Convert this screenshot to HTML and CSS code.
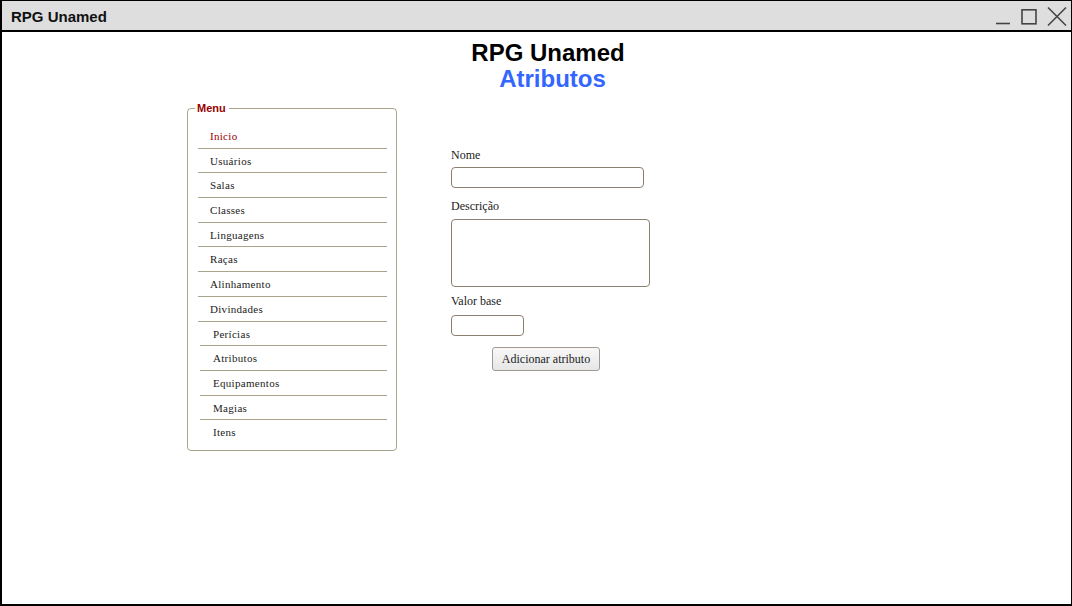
FILE: index.html
```html
<!DOCTYPE html>
<html lang="pt">
<head>
<meta charset="utf-8">
<title>RPG Unamed</title>
<link rel="stylesheet" href="styles.css">
</head>
<body>
<div class="window">
  <div class="titlebar">
    <span class="title">RPG Unamed</span>
    <div class="controls">
      <svg width="16" height="16" viewBox="0 0 16 16"><line x1="1" y1="14.5" x2="15" y2="14.5" stroke="#444" stroke-width="1.6"/></svg>
      <svg width="16" height="16" viewBox="0 0 16 16"><rect x="1" y="0.8" width="14" height="14" fill="none" stroke="#444" stroke-width="1.6"/></svg>
      <svg width="20" height="19" viewBox="0 0 20 19"><path d="M1 0.5 L19 18.5 M19 0.5 L1 18.5" stroke="#444" stroke-width="1.5" fill="none"/></svg>
    </div>
  </div>
  <div class="content">
    <h1 class="app-title">RPG Unamed</h1>
    <h2 class="page-title">Atributos</h2>
    <div class="row">
      <fieldset class="menu">
        <legend>Menu</legend>
        <ul>
          <li class="active">Inicio</li>
          <li>Usuários</li>
          <li>Salas</li>
          <li>Classes</li>
          <li>Linguagens</li>
          <li>Raças</li>
          <li>Alinhamento</li>
          <li>Divindades</li>
          <li class="shift">Perícias</li>
          <li class="shift">Atributos</li>
          <li class="shift">Equipamentos</li>
          <li class="shift">Magias</li>
          <li class="shift">Itens</li>
        </ul>
      </fieldset>
      <form class="form">
        <label class="lbl">Nome</label>
        <input class="inp nome" type="text">
        <label class="lbl">Descrição</label>
        <textarea class="inp desc"></textarea>
        <label class="lbl">Valor base</label>
        <input class="inp valor" type="text">
        <button class="btn" type="button">Adicionar atributo</button>
      </form>
    </div>
  </div>
</div>
</body>
</html>
```

FILE: styles.css
```css
* { box-sizing: border-box; }
html, body { margin: 0; padding: 0; background: #fff; }
.window {
  width: 1072px;
  height: 606px;
  border-left: 2px solid #000;
  border-right: 1px solid #000;
  border-bottom: 2px solid #000;
  border-top: 1px solid #000;
  display: flex;
  flex-direction: column;
}
.titlebar {
  height: 31px;
  background: #dedede;
  border-bottom: 2px solid #000;
  display: flex;
  align-items: center;
  justify-content: space-between;
  padding: 2px 4px 0 9px;
  flex: none;
}
.title {
  font-family: "Liberation Sans", Arial, sans-serif;
  font-weight: bold;
  font-size: 15px;
  color: #111;
}
.controls { display: flex; align-items: center; gap: 10px; padding-top: 0; }
.controls svg { display: block; }
.content { flex: 1; }
.app-title {
  margin: 8px 0 0 0;
  text-align: center;
  font-family: "Liberation Sans", Arial, sans-serif;
  font-size: 24px;
  line-height: 26px;
  font-weight: bold;
  color: #000;
  padding-left: 23px;
}
.page-title {
  margin: 0;
  text-align: center;
  font-family: "Liberation Sans", Arial, sans-serif;
  font-size: 24px;
  line-height: 26px;
  font-weight: bold;
  color: #3366ff;
  padding-left: 32px;
}
.row {
  display: flex;
  align-items: flex-start;
  padding-left: 185px;
  margin-top: 10px;
  gap: 54px;
}
.menu {
  margin: 0;
  width: 210px;
  padding: 0 0 5px 0;
  border: 1px solid #a8a48c;
  border-radius: 4px;
  min-width: 0;
}
.menu legend {
  margin-left: 7px;
  padding: 0 3px 0 2px;
  font-family: "Liberation Sans", Arial, sans-serif;
  font-weight: bold;
  font-size: 11px;
  line-height: 13px;
  color: #990000;
}
.menu ul {
  list-style: none;
  margin: 9px 0 0 10px;
  padding: 0;
  width: 189px;
}
.menu li {
  height: 24.7px;
  line-height: 24px;
  padding-left: 12px;
  border-bottom: 1px solid #a8a48c;
  font-family: "Liberation Serif", "Times New Roman", serif;
  font-size: 11px;
  letter-spacing: 0.3px;
  color: #222;
}
.menu li:last-child { border-bottom: none; }
.menu li.active { color: #990000; }
.menu li.shift { margin-left: 2px; padding-left: 13px; }
.form {
  display: flex;
  flex-direction: column;
  align-items: flex-start;
  margin-top: 45px;
  font-family: "Liberation Serif", "Times New Roman", serif;
}
.lbl {
  font-size: 12px;
  line-height: 16px;
  color: #222;
}
.inp {
  border: 1px solid #8c8070;
  border-radius: 4px;
  background: #fff;
  font-family: inherit;
  margin: 0;
  padding: 2px 4px;
}
.nome { width: 193px; height: 21px; margin: 4px 0 10px; }
.desc { width: 199px; height: 68px; margin: 5px 0 6px; resize: none; }
.valor { width: 73px; height: 21px; margin: 6px 0 11px; }
.btn {
  margin-left: 41px;
  width: 108px;
  height: 24px;
  padding: 0;
  font-family: "Liberation Serif", "Times New Roman", serif;
  font-size: 12px;
  color: #222;
  background: linear-gradient(#f8f8f8, #e6e6e6);
  border: 1px solid #a09a90;
  border-radius: 3px;
}
```
